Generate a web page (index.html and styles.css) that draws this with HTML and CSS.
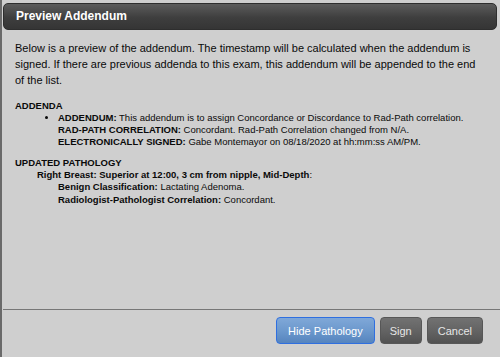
FILE: index.html
```html
<!DOCTYPE html>
<html lang="en">
<head>
  <meta charset="UTF-8">
  <title>Preview Addendum</title>
  <link rel="stylesheet" href="styles.css">
</head>
<body>
<div class="dialog">
  <div class="dialog-header">Preview Addendum</div>

  <div class="dialog-body">
    <p class="intro">Below is a preview of the addendum. The timestamp will be calculated when the addendum is signed. If there are previous addenda to this exam, this addendum will be appended to the end of the list.</p>

    <div class="section">
      <div class="section-title">ADDENDA</div>
      <ul class="addenda">
        <li>
          <b>ADDENDUM:</b> This addendum is to assign Concordance or Discordance to Rad-Path correlation.<br>
          <b>RAD-PATH CORRELATION:</b> Concordant. Rad-Path Correlation changed from N/A.<br>
          <b>ELECTRONICALLY SIGNED:</b> Gabe Montemayor on 08/18/2020 at hh:mm:ss AM/PM.
        </li>
      </ul>
    </div>

    <div class="section">
      <div class="section-title">UPDATED PATHOLOGY</div>
      <div class="site"><b>Right Breast: Superior at 12:00, 3 cm from nipple, Mid-Depth</b>:</div>
      <div class="finding"><b>Benign Classification:</b> Lactating Adenoma.</div>
      <div class="finding"><b>Radiologist-Pathologist Correlation:</b> Concordant.</div>
    </div>
  </div>

  <div class="dialog-footer">
    <button class="btn btn-primary">Hide Pathology</button>
    <button class="btn btn-sign">Sign</button>
    <button class="btn">Cancel</button>
  </div>
</div>
</body>
</html>
```

FILE: styles.css
```css
body {
  margin: 0;
  font-family: "Liberation Sans", Arial, sans-serif;
  background-color: #cfcfcf;
  color: #0a0a0a;
}

.dialog {
  height: 357px;
  display: flex;
  flex-direction: column;
  border-left: 2px solid #6a6a6a;
  background-color: #cfcfcf;
  box-sizing: border-box;
}

.dialog-header {
  margin: 3px 3px 0 1px;
  height: 25px;
  line-height: 25px;
  padding-left: 12px;
  border-radius: 5px;
  background: linear-gradient(#5c5c5c, #3e3e3e 55%, #353535);
  border: 1px solid #2e2e2e;
  color: #fff;
  font-size: 12px;
  font-weight: bold;
}

.dialog-body {
  flex: 1;
  padding: 10px 13px 0;
}

.intro {
  margin: 0 0 12px;
  font-size: 11px;
  line-height: 16px;
}

.section {
  margin-bottom: 9px;
  font-size: 9.5px;
  line-height: 12px;
}

.section-title {
  font-weight: bold;
}

.addenda {
  margin: 0;
  padding-left: 43px;
}

.site {
  padding-left: 22px;
}

.finding {
  padding-left: 43px;
}

.finding + .finding {
  margin-top: 1px;
}

.dialog-footer {
  display: flex;
  justify-content: flex-end;
  gap: 5px;
  height: 48px;
  padding: 7px 17px 0 0;
  border-top: 1px solid #777;
  margin-left: 1px;
  box-sizing: border-box;
}

.btn {
  height: 27px;
  padding: 0 10px;
  border: 1px solid #575757;
  border-radius: 4px;
  background: linear-gradient(#727272, #626262 55%, #525252);
  color: #e6e6e6;
  font-family: "Liberation Sans", Arial, sans-serif;
  font-size: 11px;
}

.btn-sign {
  padding: 0 9px;
}

.btn-primary {
  padding: 0 11px;
  border-color: #2f6fe0;
  background: linear-gradient(#80a8d8, #6a97cc 55%, #5684be);
  color: #fff;
}
```
